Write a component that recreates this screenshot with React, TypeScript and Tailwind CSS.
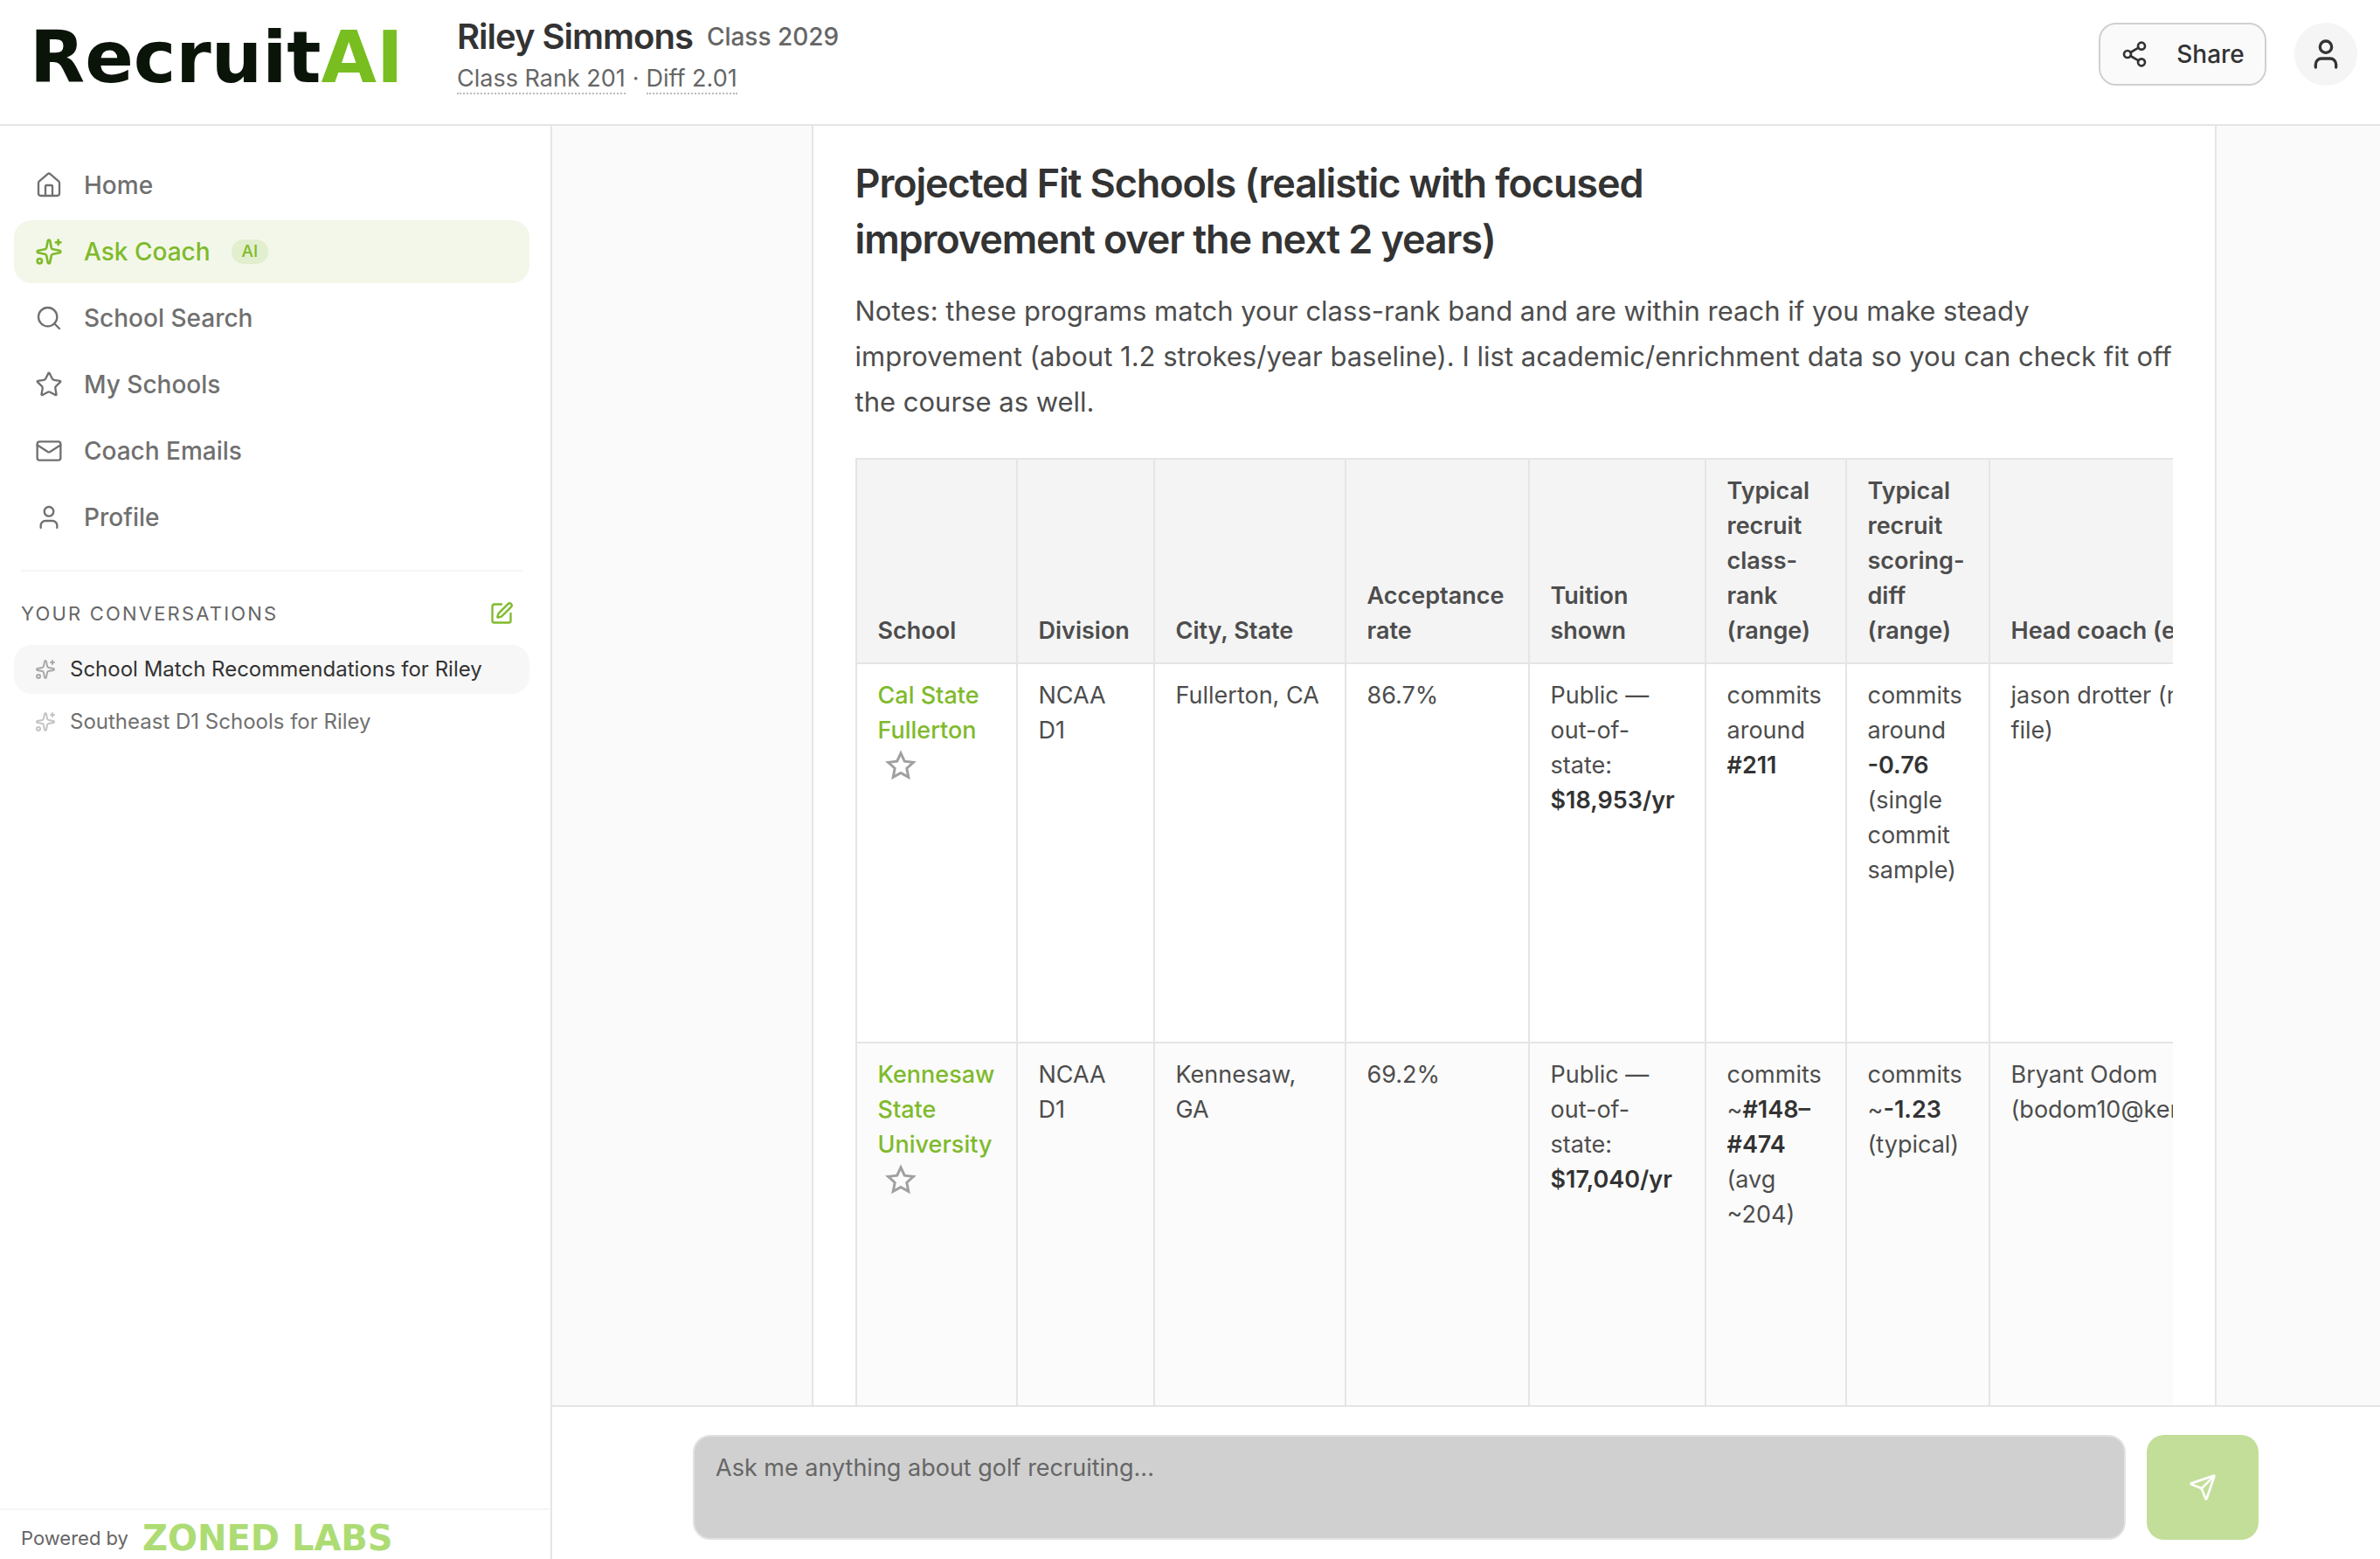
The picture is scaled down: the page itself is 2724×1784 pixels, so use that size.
import type { ReactNode } from 'react'
import { Home, Mail, Search, Send, Share2, Sparkles, SquarePen, Star, User } from 'lucide-react'
import clsx from 'clsx'

const navItems = [
  { label: 'Home', icon: Home },
  { label: 'Ask Coach', icon: Sparkles, badge: 'AI', active: true },
  { label: 'School Search', icon: Search },
  { label: 'My Schools', icon: Star },
  { label: 'Coach Emails', icon: Mail },
  { label: 'Profile', icon: User },
]

const conversations = [
  { title: 'School Match Recommendations for Riley', active: true },
  { title: 'Southeast D1 Schools for Riley', active: false },
]

const columns = [
  { label: 'School', width: 'w-[184px]' },
  { label: 'Division', width: 'w-[157px]' },
  { label: 'City, State', width: 'w-[219px]' },
  { label: 'Acceptance rate', width: 'w-[210px]' },
  { label: 'Tuition shown', width: 'w-[202px]' },
  { label: 'Typical recruit class-rank (range)', width: 'w-[161px]' },
  { label: 'Typical recruit scoring-diff (range)', width: 'w-[164px]' },
  { label: 'Head coach (email)', width: 'w-[390px]' },
]

interface School {
  name: string
  division: string
  city: string
  acceptance: string
  tuition: string
  rank: ReactNode
  diff: ReactNode
  coach: string
}

const schools: School[] = [
  {
    name: 'Cal State Fullerton',
    division: 'NCAA D1',
    city: 'Fullerton, CA',
    acceptance: '86.7%',
    tuition: '$18,953/yr',
    rank: <>commits around <Strong>#211</Strong></>,
    diff: <>commits around <Strong>-0.76</Strong> (single commit sample)</>,
    coach: 'jason drotter (no email on file)',
  },
  {
    name: 'Kennesaw State University',
    division: 'NCAA D1',
    city: 'Kennesaw, GA',
    acceptance: '69.2%',
    tuition: '$17,040/yr',
    rank: <>commits ~<Strong>#148–#474</Strong> (avg ~204)</>,
    diff: <>commits ~<Strong>-1.23</Strong> (typical)</>,
    coach: 'Bryant Odom (bodom10@kennesaw.edu)',
  },
]

function Strong({ children }: { children: ReactNode }) {
  return <strong className="font-semibold text-[#333333]">{children}</strong>
}

function SaveStar() {
  return (
    <svg viewBox="0 0 24 24" className="size-9" fill="none" stroke="currentColor" strokeWidth={2}>
      <path d="M12 2.6l2.85 6.2 6.75.75-5.05 4.6 1.3 6.75L12 17.6l-5.85 3.3 1.3-6.75L2.4 9.55l6.75-.75z" />
    </svg>
  )
}

function Header() {
  return (
    <header className="flex h-36 shrink-0 items-start justify-between border-b-2 border-[#e5e5e5] bg-white pl-[34px] pr-[26px]">
      <div className="flex">
        <a href="#" className="w-[489px] font-['DejaVu_Sans'] text-[82px] font-bold leading-[132px] text-[#0a1409]">
          Recruit<span className="text-[#78be20]">AI</span>
        </a>
        <div className="pt-[18px]">
          <div className="flex items-center gap-4">
            <h1 className="text-[40px] font-semibold leading-12 tracking-tight text-[#333333]">Riley Simmons</h1>
            <span className="text-[28px] font-medium text-[#666666]">Class 2029</span>
          </div>
          <div className="mt-2 flex gap-2 text-[27px] leading-8 text-[#666666]">
            <span className="border-b-2 border-dotted border-[#bbbbbb]">Class Rank 201</span>
            <span>·</span>
            <span className="border-b-2 border-dotted border-[#bbbbbb]">Diff 2.01</span>
          </div>
        </div>
      </div>
      <div className="flex items-center gap-8 pt-[26px]">
        <button className="flex h-18 w-48 items-center justify-center gap-8 rounded-[20px] border-2 border-[#d0d0d0] bg-[#fafafa] text-[28px] font-medium text-[#333333]">
          <Share2 className="size-8" strokeWidth={2} />
          Share
        </button>
        <button aria-label="Account" className="flex size-18 items-center justify-center rounded-full bg-[#f5f5f5] text-[#333333]">
          <User className="size-10" strokeWidth={2} />
        </button>
      </div>
    </header>
  )
}

function Sidebar() {
  return (
    <aside className="flex w-[632px] shrink-0 flex-col border-r-2 border-[#e5e5e5] bg-white">
      <nav className="flex flex-col gap-1 px-4 pt-8">
        {navItems.map(({ label, icon: Icon, badge, active }) => (
          <a
            key={label}
            href="#"
            className={clsx(
              'mr-2 flex h-18 items-center gap-6 rounded-[20px] px-6 text-[28px] font-medium',
              active ? 'bg-[#f3f7e9] text-[#7fba2c]' : 'text-[#707070]'
            )}
          >
            <Icon className="size-8" strokeWidth={active ? 2 : 1.75} />
            {label}
            {badge && (
              <span className="rounded-full bg-[#e1efce] px-3 text-[19px] font-medium leading-7">{badge}</span>
            )}
          </a>
        ))}
      </nav>
      <div className="mx-6 mr-8 mt-6 flex items-center justify-between border-t-2 border-[#f5f5f5] pr-[10px] pt-8">
        <h2 className="text-[22px] leading-8 tracking-widest text-[#666666]">YOUR CONVERSATIONS</h2>
        <button aria-label="New conversation" className="text-[#7fba2c]">
          <SquarePen className="size-7" />
        </button>
      </div>
      <ul className="mt-5 flex flex-col gap-1 px-4">
        {conversations.map((c) => (
          <li key={c.title} className="mr-2">
            <a
              href="#"
              className={clsx(
                'flex h-14 items-center gap-4 rounded-[20px] px-6 text-[24px]',
                c.active ? 'bg-[#f7f7f7] text-[#333333]' : 'text-[#707070]'
              )}
            >
              <Sparkles className={clsx('size-6', c.active ? 'text-[#a8a8a8]' : 'text-[#c4c4c4]')} />
              {c.title}
            </a>
          </li>
        ))}
      </ul>
      <div className="mt-auto flex h-[58px] items-center gap-4 border-t-2 border-[#f5f5f5] px-6 pt-2">
        <span className="text-[22px] text-[#666666]">Powered by</span>
        <a href="#" className="font-['DejaVu_Sans'] text-[40px] font-bold leading-10 text-[#addc74]">ZONED LABS</a>
      </div>
    </aside>
  )
}

function SchoolTable() {
  return (
    <div className="overflow-hidden">
      <table className="w-[1687px] table-fixed border-collapse text-[27px] leading-10 text-[#4d4d4d]">
        <thead>
          <tr className="bg-[#f4f4f4]">
            {columns.map((col) => (
              <th
                key={col.label}
                scope="col"
                className={clsx('border-2 border-[#e5e5e5] px-6 py-4 text-left align-bottom font-semibold', col.width)}
              >
                {col.label}
              </th>
            ))}
          </tr>
        </thead>
        <tbody>
          {schools.map((s) => (
            <tr key={s.name} className="h-[434px] align-top even:bg-[#fbfbfb] *:border-2 *:border-[#e5e5e5] *:px-6 *:py-4">
              <td>
                <a href="#" className="font-medium text-[#7fba2c]">{s.name}</a>
                <button aria-label={'Save ' + s.name} className="ml-2 block h-10 text-[#a0a0a0]">
                  <SaveStar />
                </button>
              </td>
              <td>{s.division}</td>
              <td>{s.city}</td>
              <td>{s.acceptance}</td>
              <td>Public — out-of-state: <Strong>{s.tuition}</Strong></td>
              <td>{s.rank}</td>
              <td>{s.diff}</td>
              <td>{s.coach}</td>
            </tr>
          ))}
        </tbody>
      </table>
    </div>
  )
}

function Composer() {
  return (
    <form className="flex h-[176px] shrink-0 justify-center border-t-2 border-[#e5e5e5] bg-white pl-[22px] pt-8">
      <div className="flex h-[120px] w-full max-w-[1792px] gap-6">
        <textarea
          aria-label="Message"
          placeholder="Ask me anything about golf recruiting..."
          className="min-w-0 flex-1 resize-none rounded-[20px] border-2 border-[#e2e2e2] bg-[#d0d0d0] px-6 py-4 text-[27px] leading-10 placeholder:text-[#666666]"
        />
        <button type="button" aria-label="Send" className="flex w-32 items-center justify-center rounded-[20px] bg-[#c2de98] text-white">
          <Send className="size-8" />
        </button>
      </div>
    </form>
  )
}

export default function App() {
  return (
    <div className="flex h-screen flex-col overflow-hidden bg-white font-['Inter',sans-serif]">
      <Header />
      <div className="flex min-h-0 flex-1">
        <Sidebar />
        <div className="flex min-w-0 flex-1 flex-col">
          <main className="flex min-h-0 flex-1 justify-center overflow-hidden bg-[#fafafa] pl-[109px]">
            <article className="w-full max-w-[1608px] border-x-2 border-[#e5e5e5] bg-white px-12 pt-[34px]">
              <h2 className="max-w-[1000px] text-[45px] font-semibold leading-16 tracking-tight text-[#333333]">
                Projected Fit Schools (realistic with focused improvement over the next 2 years)
              </h2>
              <p className="-mr-4 mb-[38px] mt-6 text-[31px] leading-[52px] text-[#4d4d4d]">
                Notes: these programs match your class-rank band and are within reach if you make steady improvement
                (about 1.2 strokes/year baseline). I list academic/enrichment data so you can check fit off the course as
                well.
              </p>
              <SchoolTable />
            </article>
          </main>
          <Composer />
        </div>
      </div>
    </div>
  )
}
